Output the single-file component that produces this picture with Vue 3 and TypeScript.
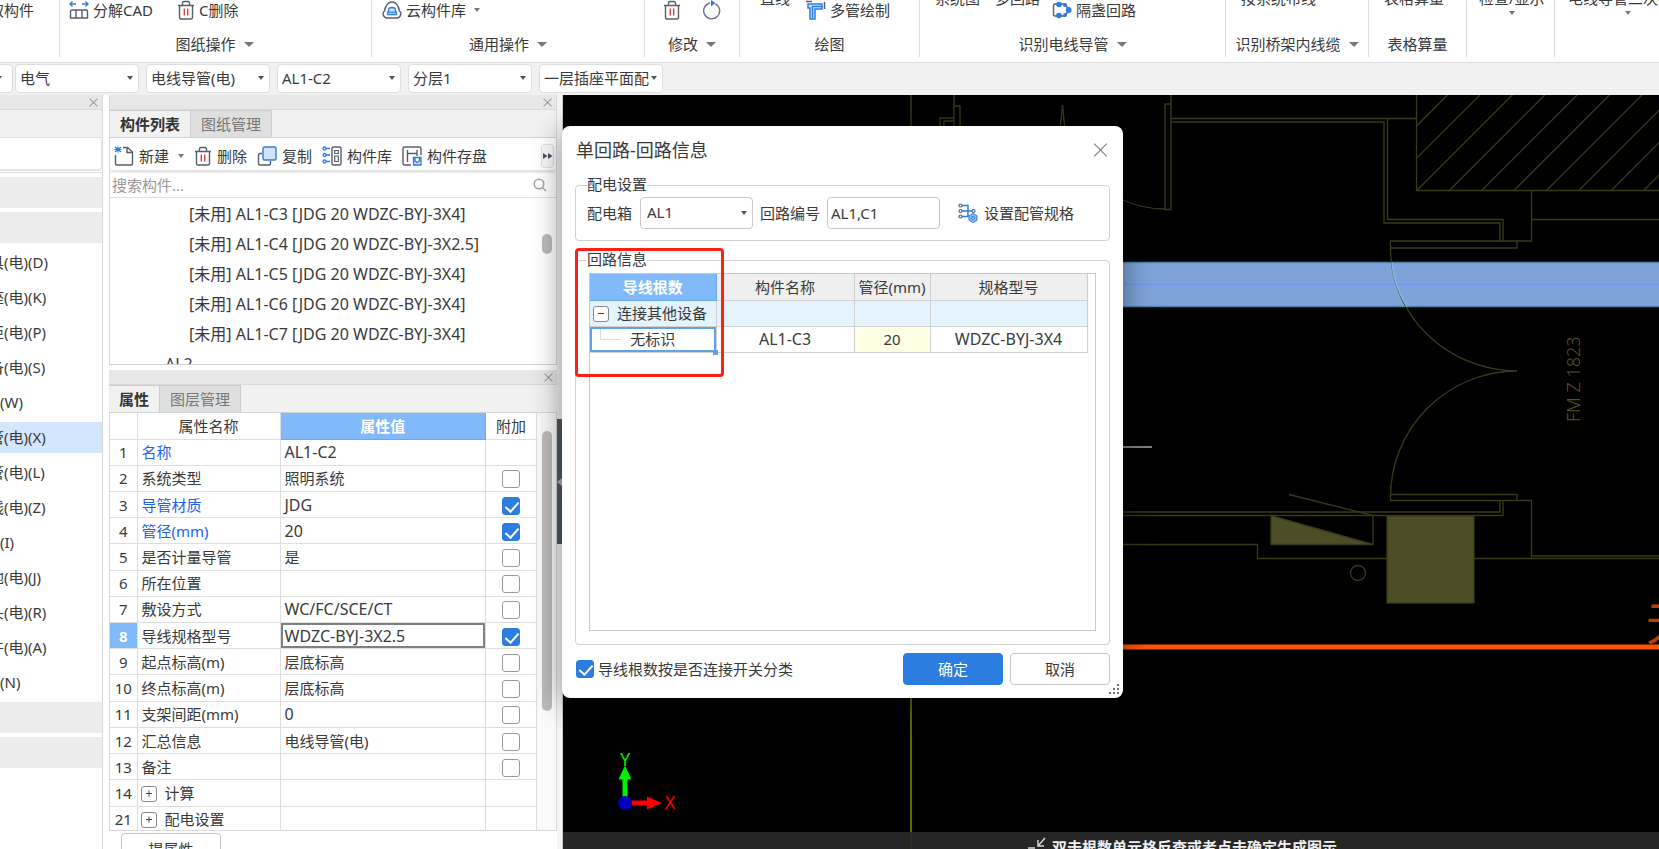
<script setup lang="ts">
import { ref } from 'vue'

interface NavItem { text: string; short?: boolean; selected?: boolean; block?: boolean }
interface PropRow { no: number; name: string; value: string; check?: boolean; linked?: boolean; current?: boolean; group?: boolean }

const filters = ['电气', '电线导管(电)', 'AL1-C2', '分层1', '一层插座平面配']

const navItems: NavItem[] = [
  { text: '', block: true },
  { text: '', block: true },
  { text: '具(电)(D)' },
  { text: '座(电)(K)' },
  { text: '柜(电)(P)' },
  { text: '备(电)(S)' },
  { text: '(W)', short: true },
  { text: '管(电)(X)', selected: true },
  { text: '管(电)(L)' },
  { text: '线(电)(Z)' },
  { text: '(I)', short: true },
  { text: '地(电)(J)' },
  { text: '头(电)(R)' },
  { text: '件(电)(A)' },
  { text: '(N)', short: true },
  { text: '', block: true },
  { text: '', block: true },
]

const treeItems = [
  '[未用] AL1-C3 [JDG 20 WDZC-BYJ-3X4]',
  '[未用] AL1-C4 [JDG 20 WDZC-BYJ-3X2.5]',
  '[未用] AL1-C5 [JDG 20 WDZC-BYJ-3X4]',
  '[未用] AL1-C6 [JDG 20 WDZC-BYJ-3X4]',
  '[未用] AL1-C7 [JDG 20 WDZC-BYJ-3X4]',
]

const props = ref<PropRow[]>([
  { no: 1, name: '名称', value: 'AL1-C2', linked: true },
  { no: 2, name: '系统类型', value: '照明系统', check: false },
  { no: 3, name: '导管材质', value: 'JDG', check: true, linked: true },
  { no: 4, name: '管径(mm)', value: '20', check: true, linked: true },
  { no: 5, name: '是否计量导管', value: '是', check: false },
  { no: 6, name: '所在位置', value: '', check: false },
  { no: 7, name: '敷设方式', value: 'WC/FC/SCE/CT', check: false },
  { no: 8, name: '导线规格型号', value: 'WDZC-BYJ-3X2.5', check: true, current: true },
  { no: 9, name: '起点标高(m)', value: '层底标高', check: false },
  { no: 10, name: '终点标高(m)', value: '层底标高', check: false },
  { no: 11, name: '支架间距(mm)', value: '0', check: false },
  { no: 12, name: '汇总信息', value: '电线导管(电)', check: false },
  { no: 13, name: '备注', value: '', check: false },
  { no: 14, name: '计算', value: '', group: true },
  { no: 21, name: '配电设置', value: '', group: true },
])

const isLatin = (s: string): boolean => /^[A-Z0-9./-]+$/.test(s)

const circuitNo = ref('AL1,C1')
const splitBySwitch = ref(true)
const keyword = ref('')

const hatch = Array.from({ length: 14 }, (_, i) => 1352 + i * 32.4)
</script>

<template>
  <div class="app">
    <svg class="defs" aria-hidden="true">
      <symbol id="i-trash" viewBox="0 0 18 20">
        <path d="M1 5.500h16M5.500 5V3a1.500 1.500 0 0 1 1.500-1.500h4A1.500 1.500 0 0 1 12.500 3v2M2.500 6v11.500a1.500 1.500 0 0 0 1.500 1.500h10a1.500 1.500 0 0 0 1.500-1.500V6" fill="none" stroke="#565e6e" stroke-width="1.400" />
        <path d="M7.300 8.500v7M10.700 8.500v7" stroke="#e0403c" stroke-width="1.400" />
      </symbol>
    </svg>

    <header class="ribbon">
      <section class="group g0">
        <div class="tools"><button class="tool cut">取构件</button></div>
      </section>
      <section class="group g1">
        <div class="tools">
          <button class="tool">
            <svg width="20" height="20" viewBox="0 0 20 20"><path d="M1 4h6M3.500 1.500 1 4l2.500 2.500M19 4h-6M16.500 1.500 19 4l-2.500 2.500" fill="none" stroke="#2b7de1" stroke-width="1.400" /><path d="M1.500 18v-6.500a1.500 1.500 0 0 1 1.500-1.500h14a1.500 1.500 0 0 1 1.500 1.500V18zM7 10v8M13 10v8" fill="none" stroke="#565e6e" stroke-width="1.400" /></svg>
            分解CAD
          </button>
          <button class="tool"><svg width="18" height="20"><use href="#i-trash" /></svg>C删除</button>
        </div>
        <button class="caption">图纸操作<i class="caret big"></i></button>
      </section>
      <section class="group g2">
        <div class="tools">
          <button class="tool">
            <svg width="20" height="20" viewBox="0 0 20 20"><path d="M5 18a4 4 0 0 1-2.500-7C3.500 6 5.500 2 10 2s6.500 4 7.500 9A4 4 0 0 1 15 18z" fill="none" stroke="#565e6e" stroke-width="1.400" /><path d="M6.500 12V10a3.500 2.500 0 0 1 7 0v2M5.500 12.200h9v2.300h-9z" fill="#cfe3fb" stroke="#2b7de1" stroke-width="1.300" /></svg>
            云构件库<i class="caret"></i>
          </button>
        </div>
        <button class="caption">通用操作<i class="caret big"></i></button>
      </section>
      <section class="group g3">
        <div class="tools">
          <button class="tool" aria-label="删除"><svg width="18" height="20"><use href="#i-trash" /></svg></button>
          <button class="tool" aria-label="旋转"><svg width="20" height="20" viewBox="0 0 20 20"><path d="M14.500 3.800A8 8 0 1 1 9 3" fill="none" stroke="#6b7484" stroke-width="1.400" /><path d="M10 0l4.500 3-4.500 3.500z" fill="#2b7de1" /></svg></button>
        </div>
        <button class="caption">修改<i class="caret big"></i></button>
      </section>
      <section class="group g4">
        <div class="tools">
          <button class="tool high">直线</button>
          <button class="tool">
            <svg width="20" height="20" viewBox="0 0 20 20"><path d="M2 4h14v5H9v10H4V8H2z" fill="#cfe3fb" stroke="#2b7de1" stroke-width="1.500" /><path d="M6.500 18V6.500H16" fill="none" stroke="#2b7de1" stroke-width="1.500" /><path d="M0 1.500h6M18.500 2v7" stroke="#565e6e" stroke-width="1.500" /></svg>
            多管绘制
          </button>
        </div>
        <div class="caption">绘图</div>
      </section>
      <section class="group g5">
        <div class="tools">
          <button class="tool high">系统图</button>
          <button class="tool high">多回路</button>
          <button class="tool">
            <svg width="20" height="20" viewBox="0 0 20 20"><path d="M6 4H3a1.500 1.500 0 0 0-1.500 1.500v9A1.500 1.500 0 0 0 3 16h3M6 4h7l4 6-4 6H7" fill="none" stroke="#565e6e" stroke-width="1.400" /><g fill="#2b7de1"><circle cx="7" cy="4.500" r="2.800" /><circle cx="13" cy="5" r="2" /><circle cx="16.700" cy="10" r="2.900" /><circle cx="13" cy="15" r="2" /><circle cx="7" cy="15.500" r="2.800" /></g></svg>
            隔盏回路
          </button>
        </div>
        <button class="caption">识别电线导管<i class="caret big"></i></button>
      </section>
      <section class="group g6">
        <div class="tools"><button class="tool high">按系统布线</button></div>
        <button class="caption">识别桥架内线缆<i class="caret big"></i></button>
      </section>
      <section class="group g7">
        <div class="tools"><button class="tool high">表格算量</button></div>
        <div class="caption">表格算量</div>
      </section>
      <section class="group g8">
        <div class="tools"><button class="tool high stack">检查/显示<i class="caret"></i></button></div>
      </section>
      <section class="group g9">
        <div class="tools"><button class="tool high stack">电线导管二次编辑<i class="caret"></i></button></div>
      </section>
    </header>

    <nav class="filters">
      <div class="combo first"><select aria-label="楼层"><option></option></select></div>
      <div v-for="(f, i) in filters" :key="f" class="combo" :class="{ tight: i === 4 }">
        <select :aria-label="f"><option>{{ f }}</option></select>
      </div>
    </nav>

    <main class="work">
      <aside class="nav">
        <div class="strip"><button class="x" aria-label="关闭"></button></div>
        <div class="nav-tabs"></div>
        <div class="nav-tools"></div>
        <ul class="nav-list">
          <li v-for="(n, i) in navItems" :key="i" :class="{ block: n.block, selected: n.selected, short: n.short }">{{ n.text }}</li>
        </ul>
      </aside>

      <div class="docks">
        <section class="dock">
          <div class="strip"><button class="x" aria-label="关闭"></button></div>
          <div class="tabs"><button class="tab active">构件列表</button><button class="tab">图纸管理</button></div>
          <div class="toolbar">
            <button class="tool">
              <svg width="20" height="20" viewBox="0 0 20 20"><path d="M1.500 9v8.500A1.500 1.500 0 0 0 3 19h14a1.500 1.500 0 0 0 1.500-1.500V6L13.500 1.500H9M13 2v4.500h5" fill="none" stroke="#565e6e" stroke-width="1.400" /><path d="M1 1l6 5M7 1 1 6M4 .5v6M.5 3.500h7" stroke="#2b7de1" stroke-width="1.100" /></svg>
              新建<i class="caret"></i>
            </button>
            <button class="tool"><svg width="18" height="20"><use href="#i-trash" /></svg>删除</button>
            <button class="tool">
              <svg width="20" height="20" viewBox="0 0 20 20"><path d="M5 7.500H3A1.500 1.500 0 0 0 1.500 9v8.500A1.500 1.500 0 0 0 3 19h9a1.500 1.500 0 0 0 1.500-1.500V15" fill="none" stroke="#565e6e" stroke-width="1.400" /><rect x="6" y="1" width="13" height="13" rx="1.500" fill="#cfe3fb" stroke="#2b7de1" stroke-width="1.400" /></svg>
              复制
            </button>
            <button class="tool">
              <svg width="20" height="20" viewBox="0 0 20 20"><g fill="none" stroke="#2b7de1" stroke-width="1.300"><circle cx="2.500" cy="2.500" r="1.500" /><circle cx="2.500" cy="9" r="1.500" /><circle cx="2.500" cy="15.500" r="1.500" /><path d="M4 2.500h4M4 9h4M4 15.500h4" /></g><rect x="10" y="1" width="9" height="18" rx="1.500" fill="none" stroke="#565e6e" stroke-width="1.400" /><path d="M12.700 4.500h3.600v3h-3.600zM12.700 10h3.600v5.500h-3.600z" fill="none" stroke="#565e6e" stroke-width="1.200" /></svg>
              构件库
            </button>
            <button class="tool">
              <svg width="20" height="20" viewBox="0 0 20 20"><path d="M9 19H2.500A1.500 1.500 0 0 1 1 17.500v-15A1.500 1.500 0 0 1 2.500 1h15A1.500 1.500 0 0 1 19 2.500V9M5.500 4v12M5.500 7.500H15M15 4v6" fill="none" stroke="#565e6e" stroke-width="1.400" /><path d="M11.500 11.500h7.500V19h-7.500zM13 12v3l2 1.500 2.500-1.500v-3" fill="#cfe3fb" stroke="#2b7de1" stroke-width="1.300" /></svg>
              构件存盘
            </button>
            <button class="more" aria-label="更多"><svg width="10" height="8" viewBox="0 0 10 8"><path d="M0 1l4.500 3L0 7zM5 1l4.500 3L5 7z" fill="#4a5160" /></svg></button>
          </div>
          <div class="search">
            <input v-model="keyword" type="text" placeholder="搜索构件..." aria-label="搜索构件" />
            <svg width="14" height="14" viewBox="0 0 14 14"><circle cx="6" cy="6" r="4.800" fill="none" stroke="#a4a4a4" stroke-width="1.500" /><path d="M9.500 9.500 13 13" stroke="#a4a4a4" stroke-width="1.500" /></svg>
          </div>
          <div class="tree">
            <ul>
              <li v-for="t in treeItems" :key="t">{{ t }}</li>
              <li class="parent">AL2</li>
            </ul>
            <div class="rail"><span class="thumb small"></span></div>
          </div>
        </section>

        <section class="dock props">
          <div class="strip"><button class="x" aria-label="关闭"></button></div>
          <div class="tabs"><button class="tab active">属性</button><button class="tab">图层管理</button></div>
          <div class="prop-body">
            <table class="ptable">
              <colgroup><col class="c-no" /><col class="c-name" /><col /><col class="c-add" /></colgroup>
              <thead><tr><th></th><th>属性名称</th><th class="hot">属性值</th><th>附加</th></tr></thead>
              <tbody>
                <tr v-for="p in props" :key="p.no">
                  <td class="no" :class="{ on: p.current }">{{ p.no }}</td>
                  <td :class="{ linked: p.linked }"><button v-if="p.group" class="expander plus" :aria-label="'展开' + p.name"></button>{{ p.name }}</td>
                  <td :class="{ current: p.current, latin: isLatin(p.value) }">{{ p.value }}</td>
                  <td class="mid"><input v-if="p.check !== undefined" v-model="p.check" type="checkbox" :aria-label="p.name" /></td>
                </tr>
              </tbody>
            </table>
            <div class="rail"><span class="thumb large"></span></div>
          </div>
          <button class="extract">提属性</button>
        </section>
      </div>

      <div class="splitter"><button aria-label="收起"><svg width="5" height="8" viewBox="0 0 5 8"><path d="M5 0v8L0 4z" fill="#aeb6be" /></svg></button></div>

      <section class="canvas">
        <svg class="drawing" width="100%" height="100%" aria-label="平面图">
          <g transform="translate(-563 -95)" fill="none" stroke="#3a3a1a" stroke-width="1.300">
            <path d="M911 95v40" stroke="#2a2a12" stroke-width="2" />
            <path d="M954 95v40M954 106h6v30M940 136v-18h14M944 136v-15h10M1060 130l2.500-25 2.500 25" />
            <path d="M1171 95v114.500h-6V104h6M1123 200q20 9 42 9" />
            <path d="M1171 118.500h245M1171 122h213v101h116v18M1387.500 119v100.500h115.500v21.500" />
            <path d="M1416.500 95v95.500H3000M1531.500 190.500V241H1390.500v7h126.500v-7M1531.500 219.500H3000" />
            <path v-for="x in hatch" :key="x" :d="`M${x} 190.500l95.500-95.500`" clip-path="url(#block)" />
            <clipPath id="block"><rect x="1416" y="95" width="1500" height="96" /></clipPath>
            <rect x="1000" y="262.500" width="3000" height="44" fill="#7fa3d8" stroke="#4d86ae" stroke-width="1.500" />
            <path d="M1000 284.500H4000" stroke="#6f97f4" />
            <path d="M1390.500 248A127 123 0 0 0 1517 371A127 126 0 0 0 1390.500 497" />
            <path d="M1392 262.500Q1394 285 1407 306.500" stroke="#83b3d8" stroke-width="2" />
            <path d="M1390.500 497v-2.500h126.500v6M1390.500 497v3.500h141v58H1257.500v-14H1123M1500 500.500V512H1123M1503 500.500v15H1123" />
            <path d="M1531.500 556H3000M1531.500 558.500H3000" />
            <path d="M1289 494.500l84 21v29" />
            <path d="M1271 515.500v29h102z" fill="#4d4d26" />
            <rect x="1387" y="516" width="87" height="87" fill="#4d4d26" />
            <circle cx="1358" cy="573" r="7.500" />
            <path d="M1123 447h29" stroke="#a8a8a8" stroke-width="1.500" />
            <text class="door" transform="translate(1580 422) rotate(-90)">FM Z 1823</text>
            <path d="M1100 647H4000" stroke="#ff5500" stroke-width="5" />
            <text class="orange" x="1646" y="640">无</text>
            <path d="M911 690v300" stroke="#566b00" stroke-width="2" />
            <path d="M625 798v-22" stroke="#00f000" stroke-width="5" />
            <path d="M618.500 779.500l6.500-14 6.500 14z" fill="#00f000" stroke="none" />
            <path d="M630 803h18" stroke="#f00" stroke-width="5" />
            <path d="M647 796.500l15 6.500-15 6.500z" fill="#f00" stroke="none" />
            <circle cx="625" cy="803" r="7" fill="#0000b8" stroke="none" />
            <text class="axis green" x="625" y="766">Y</text>
            <text class="axis red" x="670" y="809">X</text>
          </g>
        </svg>
        <div class="hint">
          <svg width="18" height="14" viewBox="0 0 18 14"><path d="M17 1 10 9M10 3v6h6M0 11h7" fill="none" stroke="#d8d8d8" stroke-width="1.400" /></svg>
          双击根数单元格反查或者点击确定生成图示
        </div>
      </section>

      <form class="dialog" role="dialog" aria-label="单回路-回路信息" @submit.prevent>
        <div class="title"><h1>单回路-回路信息</h1><button type="button" class="x large" aria-label="关闭"></button></div>
        <fieldset>
          <legend>配电设置</legend>
          <div class="line">
            <label for="box">配电箱</label>
            <div class="combo field"><select id="box"><option>AL1</option></select></div>
            <label for="circuit" class="second">回路编号</label>
            <input id="circuit" v-model="circuitNo" type="text" class="text" />
            <button type="button" class="tool spec">
              <svg width="20" height="20" viewBox="0 0 20 20"><g fill="none" stroke="#565e6e" stroke-width="1.200"><circle cx="2.500" cy="2.500" r="1.500" /><circle cx="2.500" cy="8" r="1.500" /><circle cx="2.500" cy="13.500" r="1.500" /><circle cx="15.500" cy="8" r="1.500" /></g><path d="M4 2.500h6v11H4M4 8h10" fill="none" stroke="#2b7de1" stroke-width="1.500" /><path d="M15 10.500l4 2.200v4.600l-4 2.200-4-2.200v-4.600z" fill="#8dbcf5" stroke="#2b7de1" /><circle cx="15" cy="15" r="1.500" fill="#a9cdf8" stroke="#2b7de1" /></svg>
              设置配管规格
            </button>
          </div>
        </fieldset>
        <fieldset class="info">
          <legend>回路信息</legend>
          <div class="grid-box">
            <table class="ctable">
              <colgroup><col class="k1" /><col class="k2" /><col class="k3" /><col class="k4" /></colgroup>
              <thead><tr><th class="hot">导线根数</th><th>构件名称</th><th>管径(mm)</th><th>规格型号</th></tr></thead>
              <tbody>
                <tr class="parent"><td><button type="button" class="expander minus" aria-label="折叠"></button>连接其他设备</td><td></td><td></td><td></td></tr>
                <tr class="child"><td class="picked">无标识</td><td class="latin">AL1-C3</td><td class="edit">20</td><td class="latin">WDZC-BYJ-3X4</td></tr>
              </tbody>
            </table>
          </div>
        </fieldset>
        <div class="footer">
          <label><input v-model="splitBySwitch" type="checkbox" />导线根数按是否连接开关分类</label>
          <button type="submit" class="btn primary">确定</button>
          <button type="button" class="btn">取消</button>
        </div>
        <svg class="grip" width="10" height="10" viewBox="0 0 10 10"><path d="M8 0h2v2H8zM8 4h2v2H8zM4 4h2v2H4zM8 8h2v2H8zM4 8h2v2H4zM0 8h2v2H0z" fill="#6a717c" /></svg>
        <div class="marker"></div>
      </form>
    </main>
  </div>
</template>

<style>
html, body { margin: 0; height: 100%; overflow: hidden; }
</style>

<style scoped>
* { box-sizing: border-box; }
.app {
  display: flex; flex-direction: column; height: 100vh; overflow: hidden;
  font: 15px/20px "Noto Sans", "Noto Sans CJK SC", sans-serif; color: #3a3a3a; background: #fff;
}
.defs { position: absolute; width: 0; height: 0; }
button, input, select { font: inherit; color: inherit; }
button { background: none; border: 0; padding: 0; margin: 0; white-space: nowrap; }
ul { list-style: none; margin: 0; padding: 0; }
svg { flex: none; }

.caret { display: inline-block; flex: none; border: solid transparent; border-width: 4px 3px 0; border-top-color: #777; }
.caret.big { border-width: 5px 5px 0; }
.tool { display: flex; align-items: center; gap: 4px; }
.tool .caret { margin-left: 4px; }

/* ribbon */
.ribbon { display: flex; flex: none; height: 63px; border-bottom: 1px solid #dcdcdc; overflow: hidden; }
.group { flex: none; height: 57px; border-right: 1px solid #dcdcdc; }
.group .tools { display: flex; align-items: center; height: 20px; }
.group .caption { display: flex; align-items: center; justify-content: center; gap: 8px; width: 100%; height: 20px; margin-top: 14px; }
.high { align-self: flex-start; margin-top: -12px; }
.stack { flex-direction: column; gap: 3px; }
.stack .caret { margin: 0; }
.cut { margin-left: -11px; }
.g0 { width: 60px; }
.g1 { width: 312px; }
.g1 .tools { padding-left: 9px; gap: 24px; }
.g1 .caption { padding-right: 2px; }
.g2 { width: 273px; }
.g2 .tools { padding-left: 10px; }
.g3 { width: 95px; }
.g3 .tools { padding-left: 18px; gap: 20px; }
.g4 { width: 180px; }
.g4 .tools { padding-left: 20px; gap: 16px; }
.g5 { width: 306px; }
.g5 .tools { padding-left: 15px; gap: 15px; }
.g5 .tools .tool:last-child { margin-left: -3px; }
.g6 { width: 143px; }
.g6 .tools { padding-left: 15px; }
.g7 { width: 98px; }
.g7 .tools { padding-left: 15px; }
.g8 { width: 88px; }
.g8 .tools { padding-left: 12px; }
.g9 { flex: 1; border-right: 0; overflow: hidden; }
.g9 .tools { padding-left: 13px; }

/* filter bar */
.filters { display: flex; flex: none; gap: 7px; height: 32px; padding: 1px 0; background: #f1f1f1; }
.combo { position: relative; width: 124px; height: 29px; }
.combo.first { width: 15px; margin-left: -7px; }
.combo::after { content: ""; position: absolute; right: 6px; top: 12px; border: solid transparent; border-width: 4px 3px 0; border-top-color: #555; pointer-events: none; }
.combo select { appearance: none; width: 100%; height: 100%; padding: 0 14px 2px 4px; background: #fff; border: 1px solid #dedede; border-radius: 4px; }
.combo.tight select { padding-right: 0; }

/* work area */
.work { position: relative; display: grid; grid-template-columns: 103px 454px 6px minmax(0, 1fr); flex: 1; min-height: 0; }
.strip { display: flex; flex: none; align-items: center; justify-content: flex-end; height: 15px; padding-right: 5px; background: #e7e7e7; border-bottom: 1px solid #d9d9d9; }
.x { position: relative; width: 9px; height: 9px; color: #999; }
.x::before, .x::after { content: ""; position: absolute; left: 50%; top: -1px; height: 11px; border-left: 1px solid currentColor; transform: rotate(45deg); }
.x::after { transform: rotate(-45deg); }
.x.large { width: 14px; height: 14px; color: #777; }
.x.large::before, .x.large::after { top: -2px; height: 18px; }

.nav { border-right: 1px solid #d9d9d9; overflow: hidden; }
.nav-tabs { height: 28px; background: #f1f1f1; border-bottom: 1px solid #dedede; }
.nav-tools { height: 33px; border-bottom: 2px solid #e4e4e4; border-right: 1px solid #e4e4e4; border-radius: 0 4px 4px 0; }
.nav-list { display: flex; flex-direction: column; gap: 4px; margin-top: 1px; padding-top: 4px; border-top: 1px solid #dedede; }
.nav-list li { flex: none; height: 31px; line-height: 30px; text-indent: -11px; white-space: nowrap; }
.nav-list .short { text-indent: 0; }
.nav-list .block { background: #ececec; }
.nav-list .selected { background: #d3e6fd; }

.docks { display: flex; flex-direction: column; gap: 5px; min-height: 0; padding-left: 6px; }
.dock { display: flex; flex-direction: column; flex: none; min-height: 0; border: solid #d9d9d9; border-width: 0 1px; }
.dock:first-child { height: 270px; border-bottom: 1px solid #d0d0d0; }
.dock.props { flex: 1; border: 0; }
.tabs { display: flex; flex: none; height: 28px; background: #f1f1f1; border-bottom: 1px solid #d0d4d8; }
.tab { padding: 0 10px; color: #777; background: #dfdfdf; border: solid #c9ced2; border-width: 1px 1px 0 0; }
.tab.active { color: #333; background: #f1f1f1; font-weight: 700; }

.toolbar { display: flex; flex: none; align-items: center; gap: 10px; height: 34px; padding: 3px 2px 0 4px; border-bottom: 2px solid #e4e4e4; border-radius: 4px; }
.toolbar .tool { gap: 5px; }
.more { display: flex; align-items: center; justify-content: center; width: 13px; height: 24px; margin-left: auto; border: 1px solid #dedede; border-radius: 4px; background: #fafafa; }
.search { display: flex; flex: none; align-items: center; height: 26px; padding-right: 9px; border-bottom: 1px solid #dedede; border-top: 1px solid #eee; }
.search input { flex: 1; min-width: 0; height: 22px; padding: 0 2px; border: 0; outline: 0; background: none; }
.search input::placeholder { color: #999; opacity: 1; }
.tree { display: flex; flex: 1; min-height: 0; overflow: hidden; }
.tree ul { flex: 1; padding-top: 1px; font-size: 16px; }
.tree li { height: 30px; line-height: 30px; padding-left: 79px; white-space: nowrap; }
.tree .parent { padding-left: 55px; }
.rail { display: flex; flex: none; width: 19px; justify-content: center; background: #fafafa; }
.tree .rail { background: none; }
.thumb { width: 10px; border-radius: 5px; background: #bcbcbc; }
.thumb.small { height: 20px; margin-top: 36px; }
.thumb.large { height: 280px; margin-top: 18px; }

.prop-body { display: flex; flex: none; border: solid #d9d9d9; border-width: 0 1px 1px; height: 418px; overflow: hidden; }
.ptable { flex: 1; height: 420px; border-collapse: collapse; table-layout: fixed; }
.ptable th, .ptable td { height: 26px; padding: 0 4px; border: 1px solid #dedede; font-weight: 400; text-align: left; white-space: nowrap; line-height: 20px; }
.ptable th { text-align: center; border-top: 0; }
.ptable tr > :first-child { border-left: 0; }
.c-no { width: 27px; }
.c-name { width: 143px; }
.c-add { width: 51px; }
.ptable td.no { text-align: center; padding: 0; }
.ptable td.no.on { background: #80bafa; color: #fff; font-weight: 700; }
.ptable .linked { color: #1f5ff5; }
.ptable td.current { box-shadow: inset 0 0 0 2px #808080; }
.ptable td.mid { text-align: center; padding: 0; line-height: 18px; }
.ptable th.hot, .ctable th.hot { background: #80bafa; color: #fff; font-weight: 700; border-color: #6aa8ee; }
.ptable .latin, .ctable .latin { font-size: 16px; }

input[type="checkbox"] { appearance: none; position: relative; display: inline-block; width: 18px; height: 18px; margin: 0; vertical-align: middle; background: #fff; border: 1px solid #999; border-radius: 3px; }
input[type="checkbox"]:checked { background: #2b7de1; border-color: #2b7de1; }
input[type="checkbox"]:checked::after { content: ""; position: absolute; left: 5px; top: 1px; width: 6px; height: 11px; border: solid #fff; border-width: 0 2px 2px 0; transform: rotate(42deg); }

.expander { position: relative; width: 16px; height: 16px; margin: 0 8px 0 -1px; vertical-align: -2px; border: 1px solid #888; border-radius: 3px; background: #fff; }
.expander::before, .expander.plus::after { content: ""; position: absolute; left: 4px; top: 6px; width: 6px; height: 1px; background: #444; }
.expander.plus::after { transform: rotate(90deg); }

.extract { flex: none; align-self: flex-start; width: 100px; height: 32px; margin: 2px 0 0 12px; border: 1px solid #c4c4c4; border-radius: 4px; }

.splitter { padding-top: 324px; border-right: 1px solid #c8c8c8; background: #f4f4f4; }
.splitter button { display: flex; align-items: center; width: 6px; height: 125px; background: #505b67; }

.canvas { position: relative; display: flex; flex-direction: column; background: #000; overflow: hidden; min-height: 0; }
.drawing { display: block; flex: 1; min-height: 0; overflow: visible; }
.door { font-size: 18px; font-weight: 300; fill: #55552a; stroke: none; }
.orange { font-size: 46px; fill: #b34100; stroke: none; }
.axis { font-size: 18px; text-anchor: middle; stroke: none; }
.green { fill: #00f000; }
.red { fill: #f00; }
.hint { position: absolute; left: 0; right: 0; bottom: 0; display: flex; gap: 6px; height: 17px; padding: 5px 0 0 465px; background: #2a2a2ae6; color: #eee; font-weight: 700; white-space: nowrap; overflow: hidden; }

/* dialog */
.dialog { position: absolute; left: 562px; top: 31px; width: 561px; padding: 0 13px 13px; background: #fff; border-radius: 8px; box-shadow: 0 6px 30px #00000070; }
.title { display: flex; align-items: center; justify-content: space-between; height: 50px; padding: 0 3px 2px 1px; }
.title h1 { margin: 0; font-size: 18px; line-height: 24px; font-weight: 400; }
fieldset { min-width: 0; margin: 0; padding: 2px 11px 11px; border: 1px solid #d0d0d0; border-radius: 4px; }
legend { padding: 0 0 3px; line-height: 16px; }
.line { display: flex; align-items: center; height: 32px; }
.combo.field { width: 113px; height: 32px; margin-left: 8px; }
.combo.field select, .text { border: 1px solid #c8c8c8; border-radius: 4px; }
.combo.field::after { top: 14px; }
.combo.field select { padding-left: 6px; }
.second { margin: 0 7px; }
.text { width: 113px; height: 32px; padding: 0 3px 1px; background: #fff; }
.spec { margin-left: 18px; gap: 6px; }
.info { margin-top: 10px; padding-top: 3px; padding-bottom: 13px; }
.grid-box { min-height: 358px; margin: 0 2px; border: 1px solid #c8c8c8; }
.ctable { width: 497px; border-collapse: collapse; table-layout: fixed; }
.ctable th, .ctable td { height: 26px; padding: 0; border: 1px solid #d0d0d0; font-weight: 400; text-align: center; white-space: nowrap; line-height: 20px; }
.ctable th { background: #efefef; border-top: 0; }
.ctable tr > :first-child { border-left: 0; }
.k1 { width: 126px; }
.k2 { width: 138px; }
.k3 { width: 76px; }
.k4 { width: 157px; }
.ctable .parent td { background: #e5f3ff; text-align: left; padding-left: 4px; }
.ctable td.picked { position: relative; box-shadow: inset 0 0 0 2px #5fa2ea; }
.ctable td.picked::before { content: ""; position: absolute; left: 10px; top: 2px; width: 20px; height: 10px; border: solid #ddd; border-width: 0 0 1px 1px; }
.ctable td.picked::after { content: ""; position: absolute; right: -2px; bottom: -3px; width: 5px; height: 5px; background: #5fa2ea; }
.ctable .edit { background: #ffffe4; }
.footer { display: flex; align-items: center; gap: 7px; margin-top: 8px; }
.footer label { display: flex; align-items: center; gap: 4px; margin-right: auto; padding-left: 1px; }
.btn { width: 100px; height: 32px; border: 1px solid #c8c8c8; border-radius: 4px; background: #fff; }
.btn.primary { background: #2b7de1; border-color: #2b7de1; color: #fff; }
.grip { position: absolute; right: 4px; bottom: 4px; }
.marker { position: absolute; left: 13px; top: 122px; width: 149px; height: 129px; border: 3px solid #ff2015; border-radius: 4px; pointer-events: none; }
</style>
